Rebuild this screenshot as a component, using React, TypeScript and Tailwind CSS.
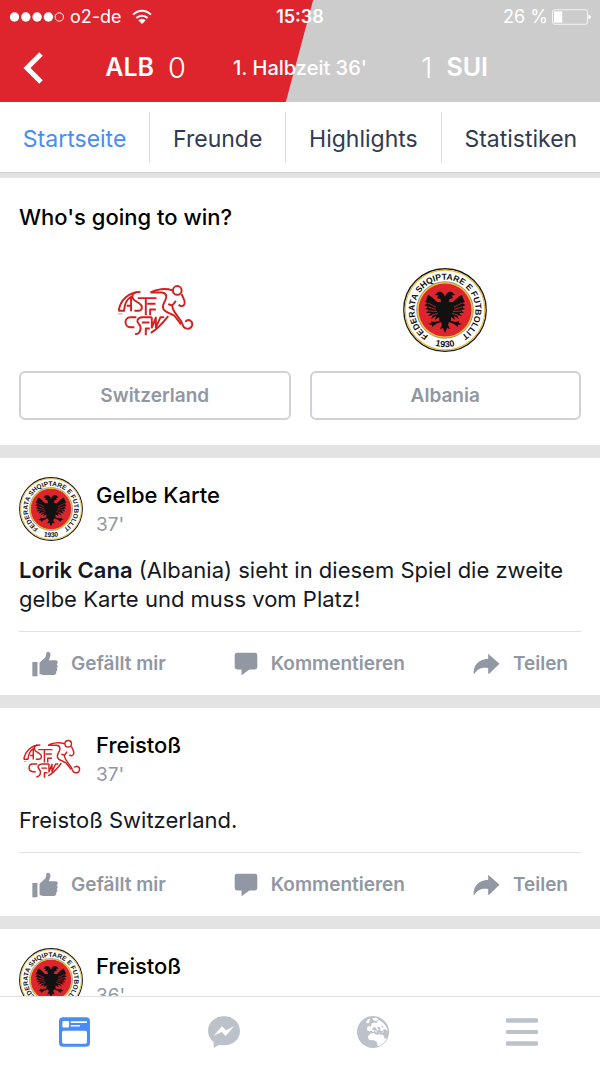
import React, { useId } from "react";

function WifiIcon() {
  return (
    <svg viewBox="0 0 60 48" className="h-4 w-5" aria-hidden="true">
      <g fill="none" stroke="white" strokeWidth="6">
        <path d="M3 17C19 1 41 1 57 17" />
        <path d="M13 27C23 18 37 18 47 27" />
      </g>
      <path d="M19 34C26 28 34 28 41 34L30 45Z" fill="white" />
    </svg>
  );
}

function BatteryIcon() {
  return (
    <svg viewBox="0 0 118 48" className="h-4 w-[39px]" aria-hidden="true">
      <rect x="1.5" y="2" width="106" height="44" rx="7" fill="none" stroke="white" strokeWidth="3" opacity="0.8" />
      <rect x="6" y="7" width="25" height="34" fill="white" />
      <path d="M110 17Q118 19 118 24T110 31Z" fill="white" />
    </svg>
  );
}

function AlbaniaBadge({ className }: { className: string }) {
  const id = useId();
  return (
    <svg viewBox="0 0 84 84" className={className} role="img" aria-label="Albania">
      <defs>
        <path id={id + "top"} d="M25.9 67.8A30.4 30.4 0 1 1 58.1 67.8" />
        <path id={id + "low"} d="M24 74.5A37.2 37.2 0 0 0 60 74.5" />
      </defs>
      <circle cx="42" cy="42" r="41.2" fill="white" stroke="#1a1a1a" strokeWidth="1.4" />
      <circle cx="42" cy="42" r="39.9" fill="none" stroke="#e8b93a" strokeWidth="1.2" />
      <circle cx="42" cy="42" r="27.2" fill="#de242c" stroke="#f5c52c" strokeWidth="1.5" />
      <circle cx="42" cy="42" r="28.3" fill="none" stroke="#333333" strokeWidth="0.5" />
      <g fontFamily="'Liberation Sans', Arial, sans-serif" fontWeight="700" fill="#111111" textAnchor="middle">
        <text fontSize="8.6">
          <textPath href={"#" + id + "top"} startOffset="50%">FEDERATA SHQIPTARE E FUTBOLLIT</textPath>
        </text>
        <text fontSize="9">
          <textPath href={"#" + id + "low"} startOffset="50%">1930</textPath>
        </text>
      </g>
      <path
        fill="#111111"
        d="M42 29C41 25 38 23 35 24L32 27L35.500 27.500L34 30L37.500 31L38 34L34 34C31 31 28 28 25 27C24 30 23 33 22 34L25 35L21.500 37L25 39L22 41L26 42L23 45L28 45L25 48L30 47L28 51L33 48L32 52L36 49L36 53L31 54L28 53L28 55L25 56L29 57L29 59L33 56L38 54L39 57L37 61L40 60L42 65L44 60L47 61L45 57L46 54L51 56L55 59L55 57L59 56L56 55L56 53L53 54L48 53L48 49L52 52L51 48L56 51L54 47L59 48L56 45L61 45L58 42L62 41L59 39L62.500 37L59 35L62 34C61 33 60 30 59 27C56 28 53 31 50 34L46 34L46.500 31L50 30L48.500 27.500L52 27L49 24C46 23 43 25 42 29Z"
      />
      <path
        d="M25 35L33 39M25 39L33 41.500M26 43L34 43.500M29 47L35 45.500M59 35L51 39M59 39L51 41.500M58 43L50 43.500M55 47L49 45.500"
        fill="none"
        stroke="#de242c"
        strokeWidth="0.8"
      />
    </svg>
  );
}

function SwissLogo({ className }: { className: string }) {
  return (
    <svg viewBox="47 70 236 158" className={className} role="img" aria-label="Switzerland">
      <g fill="none" stroke="#d2201f" strokeWidth="5.800" strokeLinejoin="round">
        <path d="M58 149C63 119 86 94 123 94" />
        <path d="M57 150H74C75 134 82 116 95 108V151M82 135H95" />
        <path d="M112 94C95 98 96 112 106 119L120 128C132 136 128 150 117 150H105" />
        <path d="M115 112H171M143 129H168" />
        <path d="M139 112V163M152 163V146H169" />
        <path d="M111 169H93C73 170 74 198 93 199H105" />
        <path d="M157 169H129C112 170 111 182 118 189C128 199 124 219 107 220" />
        <path d="M127 185H150M139 223V203H151" />
        <path d="M157 169V200L169 170V200L183 169H194" />
        <path d="M154 216C174 205 188 189 206 166" />
        <path d="M153 95C171 84 199 82 219 89M153 95H187C204 97 202 111 196 121C185 139 190 150 207 156L224 164L245 191" />
        <circle cx="233" cy="89" r="13" />
        <path d="M246 100C251 113 257 119 255 128C253 136 245 139 237 132" />
        <path d="M229 120L218 134L206 130M218 136C219 153 237 166 249 189" />
        <path d="M249 190C251 206 272 208 277 194C281 180 266 172 257 183" />
      </g>
      <path d="M57 159H69" stroke="#e28a80" strokeWidth="3" />
    </svg>
  );
}

function LikeIcon() {
  return (
    <svg viewBox="0 0 76 76" className="size-[26px]" fill="#9197a3" aria-hidden="true">
      <path d="M1 32H16V74H1ZM22 34L38 20C42 15 41 9 42 5C44 0 54 1 54 10C54 17 50 23 49 27H70C76 28 77 36 72 39C77 43 75 49 72 50C76 54 73 60 70 60C73 66 69 70 64 70H33C28 70 26 67 22 67Z" />
    </svg>
  );
}

function CommentIcon() {
  return (
    <svg viewBox="0 0 70 70" className="size-6" fill="#9197a3" aria-hidden="true">
      <path d="M9 2H61Q68 2 68 9V44Q68 51 61 51H45L22 68V51H9Q2 51 2 44V9Q2 2 9 2Z" />
    </svg>
  );
}

function ShareIcon() {
  return (
    <svg viewBox="0 0 80 66" className="h-[22px] w-[27px]" fill="#9197a3" aria-hidden="true">
      <path d="M45 2L79 32L48 62H45V45C25 43 13 48 4 62H1C1 34 18 19 45 17Z" />
    </svg>
  );
}

function FeedIcon() {
  return (
    <svg viewBox="0 0 92 88" className="h-[30px] w-[31px]" aria-hidden="true">
      <rect width="92" height="88" rx="12" fill="#4a8cf7" />
      <rect x="10" y="11" width="20" height="20" rx="3" fill="white" />
      <path d="M35 14.500H83M35 25.500H62" stroke="white" strokeWidth="5" />
      <rect x="9" y="40" width="74" height="39" rx="5" fill="white" />
    </svg>
  );
}

function MessengerIcon() {
  return (
    <svg viewBox="0 0 96 96" className="size-8" aria-hidden="true">
      <path d="M48 1C75 1 96 20 96 45S75 88 48 88C43 88 38 87 34 86L17 96V78C7 70 0 59 0 45C0 20 21 1 48 1Z" fill="#bcc1ca" />
      <path d="M17 59L42 31L54 43L78 31L53 60L41 48Z" fill="white" />
    </svg>
  );
}

function GlobeIcon() {
  return (
    <svg viewBox="0 0 96 96" className="size-8" aria-hidden="true">
      <circle cx="48" cy="48" r="48" fill="#bcc1ca" />
      <g fill="white">
        <path d="M27 18L33 10L40 8L37 15L36 21L28 22Z" />
        <path d="M46 6L60 5L64 10L58 15L49 13Z" />
        <path d="M44 23L52 19L58 22L64 11C80 18 90 32 92 45L83 39L78 42L80 49L68 51L62 47L57 50L54 43L49 48L43 44L37 46L30 43V33L36 30L41 32Z" />
        <path d="M39 53L50 51L58 56L70 55L79 58L83 68L90 66C84 79 74 88 62 91L59 77L51 73L37 72L32 63Z" />
      </g>
      <g fill="#bcc1ca">
        <path d="M45 42L50 33L57 35L60 45L53 43ZM61 33L67 32L71 38L68 43L63 39ZM73 28L81 34L75 35Z" />
        <path d="M58 43H68L79 46L74 51L60 49Z" />
      </g>
    </svg>
  );
}

function MenuIcon() {
  return (
    <svg viewBox="0 0 96 84" className="h-7 w-8" aria-hidden="true">
      <g fill="#bcc1ca">
        <rect y="1" width="96" height="13" rx="4" />
        <rect y="36" width="96" height="12" rx="4" />
        <rect y="70" width="96" height="13" rx="4" />
      </g>
    </svg>
  );
}

const tabs = ["Startseite", "Freunde", "Highlights", "Statistiken"];

const teams = [
  { name: "Switzerland", logo: <SwissLogo className="h-[53px] w-[79px]" /> },
  { name: "Albania", logo: <AlbaniaBadge className="size-[84px]" /> },
];

function Post({
  team,
  title,
  minute,
  children,
}: {
  team: "alb" | "sui";
  title: string;
  minute: string;
  children?: React.ReactNode;
}) {
  return (
    <article className="shrink-0 bg-white px-[19px] pt-[19px]">
      <div className="flex gap-[13px]">
        <div className="flex size-16 shrink-0 items-center justify-center">
          {team === "alb" ? <AlbaniaBadge className="size-16" /> : <SwissLogo className="h-10 w-[60px]" />}
        </div>
        <div className="pt-[3px]">
          <h3 className="text-[22px] leading-[30px] font-medium text-black">{title}</h3>
          <p className="text-[19px] leading-[30px] text-[#9197a3]">{minute}</p>
        </div>
      </div>
      {children && (
        <>
          <p className="mt-[15px] text-[22px] leading-[29px] text-[#141823]">{children}</p>
          <div className="mt-[17px] flex justify-between border-t border-[#dfe0e3] px-[13px] text-[19px] leading-[30px] font-semibold text-[#9197a3]">
            <button type="button" className="flex h-[63px] items-center gap-[13px]">
              <LikeIcon />
              Gefällt mir
            </button>
            <button type="button" className="flex h-[63px] items-center gap-[13px]">
              <CommentIcon />
              Kommentieren
            </button>
            <button type="button" className="flex h-[63px] items-center gap-[13px]">
              <ShareIcon />
              Teilen
            </button>
          </div>
        </>
      )}
    </article>
  );
}

export default function App() {
  return (
    <div className="flex h-screen flex-col overflow-hidden bg-[#e3e3e3] font-['Inter','Liberation_Sans',sans-serif]">
      <header className="shrink-0 bg-[linear-gradient(105deg,#de242c_calc(50%-1px),#cccccc_50%)] text-white">
        <div className="grid h-[33px] grid-cols-3 items-center px-[9px] text-[18px]">
          <div className="flex items-center gap-[6px]">
            <svg viewBox="0 0 55 10" className="h-[10px] w-[55px]" aria-hidden="true">
              <g fill="white">
                <circle cx="5.500" cy="5" r="4.700" />
                <circle cx="16.800" cy="5" r="4.700" />
                <circle cx="28.100" cy="5" r="4.700" />
                <circle cx="39.400" cy="5" r="4.700" />
              </g>
              <circle cx="50.300" cy="5" r="4.200" fill="none" stroke="white" />
            </svg>
            <span>o2-de</span>
            <span className="pl-1">
              <WifiIcon />
            </span>
          </div>
          <div className="text-center font-semibold">15:38</div>
          <div className="flex items-center justify-end gap-1">
            <span>26 %</span>
            <BatteryIcon />
          </div>
        </div>
        <div className="grid h-[69px] grid-cols-[1fr_auto_1fr] items-center">
          <div className="flex items-center justify-between pr-[47px] pl-[23px]">
            <button type="button" aria-label="Zurück">
              <svg viewBox="0 0 20 32" className="h-8 w-5" fill="none" stroke="white" strokeWidth="5" aria-hidden="true">
                <path d="M18 2L4 16L18 30" />
              </svg>
            </button>
            <div className="flex items-center gap-[14px]">
              <span className="text-[25px] font-semibold">ALB</span>
              <span className="text-[29px] font-light">0</span>
            </div>
          </div>
          <h1 className="text-[20px] font-medium">1. Halbzeit 36'</h1>
          <div className="flex items-center gap-[14px] pl-[54px]">
            <span className="text-[29px] font-light">1</span>
            <span className="text-[25px] font-semibold">SUI</span>
          </div>
        </div>
      </header>

      <nav className="flex h-[71px] shrink-0 items-center border-b border-[#cfcfcf] bg-white">
        {tabs.map((tab, i) => (
          <a
            key={tab}
            href={"#" + tab.toLowerCase()}
            className={
              "flex h-[51px] flex-auto items-center justify-center pt-1 text-[23px] " +
              (i === 0 ? "text-[#4a8cf7]" : "border-l border-[#dcdde0] text-[#2f3b52]")
            }
          >
            {tab}
          </a>
        ))}
      </nav>

      <main className="flex min-h-0 flex-1 flex-col gap-[13px] overflow-y-auto pt-[5px] [scrollbar-width:none]">
        <section className="shrink-0 bg-white px-[19px] pt-6 pb-[25px]">
          <h2 className="text-[22px] leading-[30px] font-medium text-black">Who's going to win?</h2>
          <div className="mt-9 grid grid-cols-2 gap-[19px]">
            {teams.map((team) => (
              <div key={team.name} className="flex flex-col gap-[19px]">
                <div className="flex h-[84px] items-center justify-center">{team.logo}</div>
                <button
                  type="button"
                  className="h-[49px] rounded-md border-2 border-[#cfd1d7] text-[19px] leading-[30px] font-semibold text-[#9197a3]"
                >
                  {team.name}
                </button>
              </div>
            ))}
          </div>
        </section>

        <Post team="alb" title="Gelbe Karte" minute="37'">
          <strong className="font-semibold">Lorik Cana</strong> (Albania) sieht in diesem Spiel die zweite gelbe Karte
          und muss vom Platz!
        </Post>
        <Post team="sui" title="Freistoß" minute="37'">
          Freistoß Switzerland.
        </Post>
        <Post team="alb" title="Freistoß" minute="36'" />
      </main>

      <nav className="grid h-[71px] shrink-0 grid-cols-4 border-t border-[#dfe0e3] bg-white pr-1">
        <a href="#feed" aria-label="Neuigkeiten" className="flex items-center justify-center">
          <FeedIcon />
        </a>
        <a href="#messenger" aria-label="Messenger" className="flex items-center justify-center">
          <MessengerIcon />
        </a>
        <a href="#benachrichtigungen" aria-label="Benachrichtigungen" className="flex items-center justify-center">
          <GlobeIcon />
        </a>
        <a href="#mehr" aria-label="Mehr" className="flex items-center justify-center">
          <MenuIcon />
        </a>
      </nav>
    </div>
  );
}
